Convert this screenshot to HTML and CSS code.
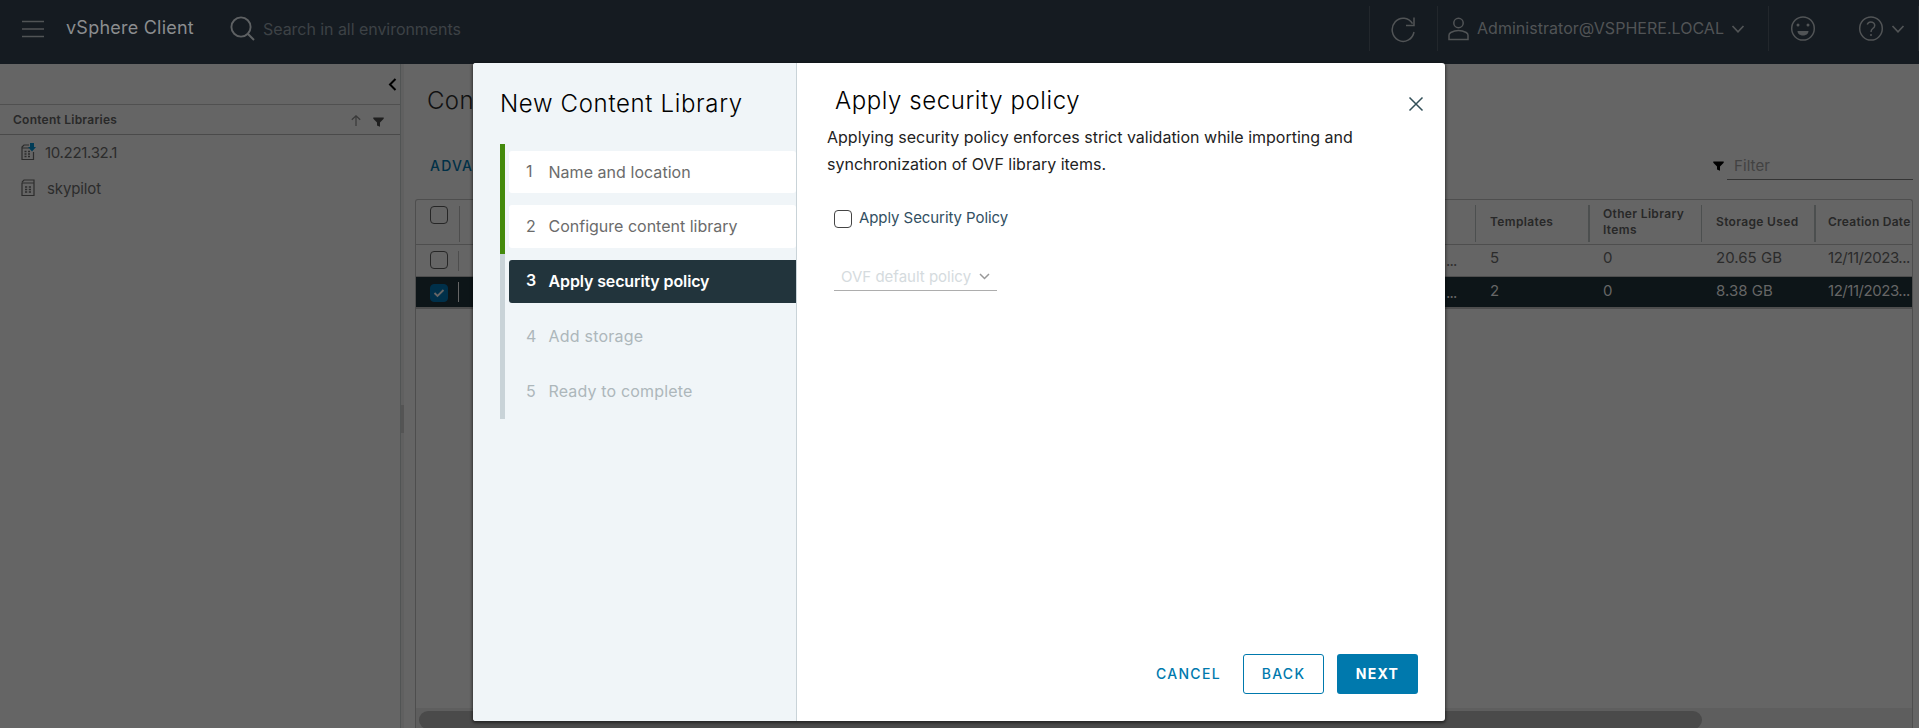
FILE: index.html
```html
<!DOCTYPE html>
<html lang="en">
<head>
<meta charset="utf-8">
<title>vSphere Client</title>
<link rel="stylesheet" href="styles.css">
</head>
<body>
<div class="app">
  <header class="header">
    <svg class="menu" width="22" height="20" viewBox="0 0 22 20"><path d="M0 2.5h22M0 10h22M0 17.5h22"/></svg>
    <div class="brand">vSphere Client</div>
    <svg class="search-icon" width="25" height="25" viewBox="0 0 25 25"><circle cx="11" cy="11" r="9.6"/><path d="M18 18l6 6"/></svg>
    <div class="placeholder">Search in all environments</div>
    <div class="tools">
      <div class="tool refresh"><svg width="26" height="28" viewBox="0 0 26 28"><path d="M22.500 8.600A11 11.600 0 1 0 24 17"/><path d="M24 2.500v8h-8"/></svg></div>
      <div class="tool user">
        <svg width="21" height="24" viewBox="0 0 21 24"><circle cx="10.5" cy="6" r="4.7"/><path d="M1 22.500v-4.200c0-1.300.8-2.200 1.800-2.800 4.600-2.400 10.800-2.400 15.400 0 1 .6 1.800 1.500 1.800 2.800v4.200z"/></svg>
        <span class="user-name">Administrator@VSPHERE.LOCAL</span>
        <svg class="chev" width="14" height="8" viewBox="0 0 14 8"><path d="M1.500 1L7 6.800 12.500 1"/></svg>
      </div>
      <div class="tool face"><svg width="26" height="27" viewBox="0 0 26 27"><ellipse cx="13" cy="13.500" rx="11.300" ry="11.600"/><circle class="solid" cx="8" cy="10" r="1.500"/><circle class="solid" cx="18" cy="10" r="1.500"/><path class="solid" d="M7.500 16h11c0 6-11 6-11 0z"/></svg></div>
      <div class="tool help">
        <svg width="26" height="27" viewBox="0 0 26 27"><ellipse cx="13" cy="13.500" rx="11.300" ry="11.600"/><path d="M9.200 9.500c1-2.300 3.300-2.800 5.100-2.300 2.300.7 3 3 1.900 4.900-1.200 1.800-3.200 1.800-3.200 4.900M13 19v2"/></svg>
        <svg class="chev" width="14" height="8" viewBox="0 0 14 8"><path d="M1.500 1L7 6.800 12.500 1"/></svg>
      </div>
    </div>
  </header>

  <div class="body">
    <aside class="sidebar">
      <div class="collapse"><svg width="9" height="13" viewBox="0 0 9 13"><path d="M7.500 1L2 6.500l5.500 5.500"/></svg></div>
      <div class="panel-head">
        <span>Content Libraries</span>
        <svg class="sort" width="10" height="11" viewBox="0 0 10 11"><path d="M5 11V1M.8 4.800L5 .8l4.200 4"/></svg>
        <svg class="funnel" width="11" height="11" viewBox="0 0 11 11"><path d="M.3.500h10.400v1.200L7 5.500V9.700L4 8.500v-3L.3 1.700z"/></svg>
      </div>
      <div class="lib">
        <svg width="15" height="18" viewBox="0 0 15 18"><path d="M8 2H3L1 4v12.500h11.500V9M1.500 5H8"/><path class="dots" d="M3.500 8.500h2m1.500 0h2M3.500 11h2m1.500 0h2M3.500 13.500h2m1.500 0h2"/><path class="down" d="M9 0h4v4h2l-4 4.500L7 4h2z"/></svg>
        <span class="ip">10.221.32.1</span>
      </div>
      <div class="lib second">
        <svg width="15" height="18" viewBox="0 0 15 18"><path d="M1 3.500V16.500h12V1H3L1 3.200M1.500 4H12.500"/><path class="dots" d="M4 8h2.200m1.600 0H10M4 10.500h2.200m1.600 0H10M4 13h2.200m1.600 0H10"/></svg>
        <span>skypilot</span>
      </div>
    </aside>
    <div class="splitter"><i></i></div>

    <main class="main">
      <h1 class="page-title">Con</h1>
      <div class="bar">
        <span class="advanced">ADVA</span>
        <svg class="funnel dark" width="11" height="11" viewBox="0 0 11 11"><path d="M.3.500h10.400v1.200L7 5.500V9.700L4 8.500v-3L.3 1.700z"/></svg>
        <div class="filter">Filter</div>
      </div>
      <div class="grid">
        <div class="row head">
          <div class="pick"><i class="box"></i><b></b></div>
          <div class="gap"></div>
          <div class="cell">Templates</div>
          <div class="cell wide">Other Library Items</div>
          <div class="cell">Storage Used</div>
          <div class="cell wide last">Creation Date</div>
        </div>
        <div class="row">
          <div class="pick"><i class="box"></i><b></b></div>
          <div class="gap">...</div>
          <div class="cell">5</div>
          <div class="cell">0</div>
          <div class="cell">20.65 GB</div>
          <div class="cell last date">12/11/2023...</div>
        </div>
        <div class="row selected">
          <div class="pick"><i class="box on"><svg width="18" height="18" viewBox="0 0 18 18"><path d="M4.500 9l3 3 6-6"/></svg></i><b></b></div>
          <div class="gap">...</div>
          <div class="cell">2</div>
          <div class="cell">0</div>
          <div class="cell">8.38 GB</div>
          <div class="cell last date">12/11/2023...</div>
        </div>
        <div class="rest"></div>
        <div class="track"><div class="thumb"></div></div>
      </div>
    </main>
  </div>
</div>

<div class="modal">
  <nav class="wizard">
    <h2 class="wizard-title">New Content Library</h2>
    <div class="steps">
      <div class="step done s1"><em>1</em><span>Name and location</span></div>
      <div class="step done s2"><em>2</em><span>Configure content library</span></div>
      <div class="step current"><em>3</em><span>Apply security policy</span></div>
      <div class="step s4"><em>4</em><span>Add storage</span></div>
      <div class="step s5"><em>5</em><span>Ready to complete</span></div>
    </div>
  </nav>
  <section class="content">
    <div class="content-head">
      <h2 class="content-title">Apply security policy</h2>
      <svg class="close" width="16" height="16" viewBox="0 0 16 16"><path d="M1.500 1.500l13 13M14.500 1.500l-13 13"/></svg>
    </div>
    <p class="intro">Applying security policy enforces strict validation while importing and<br>synchronization of OVF library items.</p>
    <div class="check"><i class="box"></i><span>Apply Security Policy</span></div>
    <div class="select"><span>OVF default policy</span><svg width="11" height="7" viewBox="0 0 11 7"><path d="M1 1l4.500 4.500L10 1"/></svg></div>
    <footer class="actions">
      <div class="btn link">CANCEL</div>
      <div class="btn outline">BACK</div>
      <div class="btn solid-btn">NEXT</div>
    </footer>
  </section>
</div>
</body>
</html>
```
FILE: styles.css
```css
* { box-sizing: border-box; }
body {
  margin: 0;
  width: 1919px;
  height: 728px;
  overflow: hidden;
  background: #656565;
  font-family: Inter, Lato, sans-serif;
  font-size: 15px;
  color: #2b2b2b;
}
svg { display: block; flex: none; fill: none; stroke: currentColor; stroke-width: 1.5; }
h1, h2, p { margin: 0; font-weight: 300; white-space: nowrap; }
i, em { font-style: normal; }
.app { height: 728px; display: flex; flex-direction: column; }

/* Header */
.header {
  height: 64px;
  flex: none;
  display: flex;
  align-items: center;
  padding: 0 0 7px 22px;
  background: #151b21;
  color: #515456;
}
.menu { color: #515456; }
.brand { width: 163px; margin-left: 22px; margin-right: 1px; font-size: 18px; letter-spacing: .23px; color: #8b8d8f; padding-bottom: 2px; }
.search-icon { color: #5e6163; stroke-width: 1.9; }
.placeholder { margin-left: 8px; font-size: 16px; letter-spacing: -.05px; color: #3d4246; }
.tools { display: flex; margin-left: auto; }
.tool { height: 45px; display: flex; align-items: center; border-left: 1px solid #22272c; }
.refresh { width: 68px; padding-left: 20px; }
.user { width: 331px; padding-left: 10px; }
.user-name { width: 254px; margin-left: 8px; padding-bottom: 1px; font-size: 16px; letter-spacing: .03px; }
.face { width: 74px; padding-left: 21px; }
.help { width: 77px; padding-left: 15px; border-left-color: transparent; border-right: 1px solid #22272c; }
.help .chev { margin-left: 7px; }
.chev { stroke-width: 1.7; }
.solid { fill: currentColor; stroke: none; }

/* Sidebar */
.body { flex: 1; display: flex; min-height: 0; }
.sidebar { width: 401px; border-right: 1px solid #515454; }
.collapse { height: 41px; display: flex; justify-content: flex-end; padding: 14px 3px 0 0; border-bottom: 1px solid #505050; color: #000; }
.collapse svg { stroke-width: 2; }
.panel-head {
  height: 30px;
  display: flex;
  align-items: center;
  padding: 0 16px 0 13px;
  border-bottom: 1px solid #4a4a4a;
  font-size: 12px;
  font-weight: 600;
  letter-spacing: .24px;
  color: #292929;
}
.panel-head span { flex: 1; }
.sort { color: #393939; stroke-width: 1.2; margin: 2px 12px 0 0; }
.funnel { fill: currentColor; stroke: none; position: relative; top: 3px; color: #1f1f1f; }
.lib { display: flex; height: 36px; align-items: center; padding: 0 0 2px 21px; color: #2c2c2c; }
.lib svg { stroke-width: 1.2; }
.lib span { margin-left: 11px; letter-spacing: -.12px; }
.lib .ip { margin-left: 9px; letter-spacing: -.31px; }
.dots { stroke-width: 1.4; }
.down { fill: #003c57; stroke: none; }
.splitter { width: 3px; padding-top: 341px; background: #606060; }
.splitter i { display: block; height: 28px; background: #545454; }

/* Main list */
.main { flex: 1; min-width: 0; padding: 22px 6px 0 11px; display: flex; flex-direction: column; }
.page-title { font-size: 24px; line-height: 30px; letter-spacing: .4px; padding-left: 12px; color: #111; }
.bar { height: 83px; flex: none; display: flex; align-items: flex-end; padding-bottom: 19px; }
.advanced { flex: 1; padding: 0 0 5px 15px; font-size: 14px; font-weight: 500; line-height: 18px; letter-spacing: 1.2px; color: #003047; }
.bar .dark { color: #000; margin: 0 3px 4px 0; top: -4px; }
.filter { width: 186px; height: 25px; padding-left: 7px; line-height: 21px; letter-spacing: .08px; border-bottom: 1px solid #343434; color: #424242; }
.grid { flex: 1; display: flex; flex-direction: column; border: 1px solid #4e4e4e; border-bottom: 0; border-radius: 3px 3px 0 0; }
.row { display: flex; flex: none; height: 32px; border-bottom: 1px solid #4e4e4e; }
.pick { display: flex; width: 58px; padding: 6px 0 0 14px; }
.pick b { width: 1px; height: 20px; margin-left: 10px; background: #4d4d4d; }
.box { display: block; flex: none; width: 18px; height: 18px; border: 1px solid #262626; border-radius: 4px; }
.gap { flex: 1; padding: 6px 0 0 972px; line-height: 20px; letter-spacing: -.8px; color: #303030; }
.cell { width: 113px; flex: none; padding-left: 15px; line-height: 26px; white-space: nowrap; letter-spacing: .02px; }
.cell.last { width: 98px; padding-left: 14px; }
.date { letter-spacing: -.46px; }
.head { height: 45px; font-size: 12px; font-weight: 600; color: #282828; }
.head .pick b { height: 36px; margin-left: 11px; }
.head .cell { height: 37px; margin-top: 5px; padding-left: 14px; border-left: 1px solid #4c4f4f; line-height: 16px; padding-top: 9px; letter-spacing: .34px; }
.head .wide { border-left-width: 2px; padding-left: 13px; }
.head .wide:not(.last) { padding-top: 1px; white-space: normal; }
.head .last { letter-spacing: .25px; padding-left: 12px; }
.selected { background: #0d1518; color: #666; border-bottom: 2px solid #4e4e4e; }
.selected .cell { line-height: 28px; }
.selected .gap { color: #666; }
.selected .pick { padding-top: 7px; }
.selected .pick b { background: #666; margin-top: -2px; }
.on { background: #00304a; border-color: #00304a; color: #666; }
.on svg { margin: -1px; stroke-width: 1.8; }
.rest { flex: 1; }
.track { height: 20px; padding: 3px 0 0 3px; background: #5e5e5e; }
.thumb { width: 1283px; height: 18px; border-radius: 9px; background: #4a4a4a; }

/* Wizard dialog */
.modal {
  position: absolute;
  left: 473px;
  top: 63px;
  width: 972px;
  height: 658px;
  display: flex;
  overflow: hidden;
  border-radius: 3px;
  background: #fff;
  box-shadow: 0 1px 3px 1px rgba(0, 0, 0, .5);
}
.wizard { width: 324px; padding: 26px 0 0 27px; background: #f0f5f8; border-right: 1px solid #c9d3d8; }
.wizard-title { font-size: 24px; line-height: 30px; letter-spacing: .65px; color: #000; }
.steps {
  margin-top: 25px;
  height: 275px;
  display: flex;
  flex-direction: column;
  gap: 12px;
  padding: 7px 0 0 9px;
  background: linear-gradient(#448a0c, #448a0c) 0 0 / 5px 110px no-repeat, linear-gradient(#c9d3d8, #c9d3d8) 0 0 / 5px 100% no-repeat;
}
.step { height: 43px; display: flex; align-items: center; padding: 0 0 1px 10px; border-radius: 3px; font-size: 16px; color: #adb7bb; letter-spacing: .16px; }
.step em { width: 23px; padding-left: 7px; margin-right: 6.5px; font-size: 16px; padding-bottom: 1px; }
.s1 { height: 42px; letter-spacing: .04px; }
.s2 { letter-spacing: 0; }
.s4 { letter-spacing: .22px; }
.done { background: #fff; color: #6b6b6b; }
.current { padding-bottom: 2px; background: #22343c; color: #fff; font-weight: 600; letter-spacing: -.12px; border-radius: 3px 0 0 3px; }
.content { flex: 1; display: flex; flex-direction: column; padding: 23px 27px 27px 30px; color: #222; }
.content-head { display: flex; justify-content: space-between; align-items: flex-end; height: 30px; padding-left: 8px; }
.content-title { font-size: 24px; line-height: 30px; letter-spacing: .57px; color: #000; }
.close { position: relative; left: 6px; top: -4px; color: #324f58; }
.intro { margin-top: 8px; font-size: 16px; font-weight: 400; line-height: 27px; }
.check { display: flex; margin: 32px 0 0 7px; color: #324f62; }
.check span { margin-left: 7px; line-height: 16px; letter-spacing: -.08px; }
.check .box { border-color: #444; }
.select { display: flex; align-items: center; width: 163px; height: 28px; margin: 35px 0 0 7px; padding-left: 7px; border-bottom: 1px solid #adadad; color: #d5dbde; }
.select svg { margin-left: 8px; color: #999; }
.actions { display: flex; justify-content: flex-end; margin-top: auto; }
.btn { height: 40px; line-height: 39px; font-size: 14px; font-weight: 500; letter-spacing: 1.3px; color: #0079ad; text-align: center; }
.link { width: 87px; text-align: left; }
.outline { width: 81px; margin-right: 13px; border: 1px solid #0079ad; border-radius: 3px; line-height: 37px; }
.solid-btn { width: 81px; border-radius: 3px; background: #0079ad; color: #fff; font-weight: 700; }
```
